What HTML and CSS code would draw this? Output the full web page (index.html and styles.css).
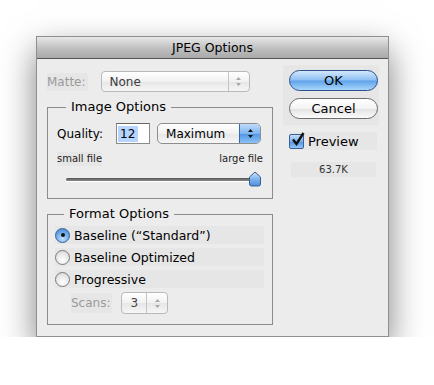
FILE: index.html
```html
<!DOCTYPE html>
<html lang="en">
<head>
  <meta charset="UTF-8" />
  <title>JPEG Options</title>
  <link rel="stylesheet" href="styles.css">
</head>
<body>
  <div class="window">
    <div class="titlebar">JPEG Options</div>
    <div class="content">
      <div class="left">
        <div class="matte-row">
          <span class="lbl muted shade">Matte:</span>
          <div class="popup disabled matte">
            <span class="popup-text">None</span>
            <span class="popup-arrows">
              <svg width="7" height="11" viewBox="0 0 7 11"><path d="M3.5 1 L6 4 H1 Z M3.5 10 L6 7 H1 Z" fill="#a8a8a8"/></svg>
            </span>
          </div>
        </div>

        <fieldset class="group">
          <legend>Image Options</legend>
          <div class="quality-row">
            <span class="lbl">Quality:</span>
            <div class="field"><span class="sel">12</span></div>
            <div class="popup quality">
              <span class="popup-text">Maximum</span>
              <span class="popup-arrows blue">
                <svg width="7" height="11" viewBox="0 0 7 11"><path d="M3.5 1 L6 4 H1 Z M3.5 10 L6 7 H1 Z" fill="#111"/></svg>
              </span>
            </div>
          </div>
          <div class="slider-labels">
            <span class="shade">small file</span>
            <span>large file</span>
          </div>
          <div class="slider">
            <div class="track"></div>
            <svg class="thumb" width="14" height="16" viewBox="0 0 14 16">
              <defs>
                <linearGradient id="tg" x1="0" y1="0" x2="0" y2="1">
                  <stop offset="0" stop-color="#cfe4fb"/>
                  <stop offset="0.5" stop-color="#7fb4ee"/>
                  <stop offset="1" stop-color="#4d8fdc"/>
                </linearGradient>
              </defs>
              <path d="M7 1 L12.5 6 V13 Q12.5 15 10.5 15 H3.5 Q1.5 15 1.5 13 V6 Z" fill="url(#tg)" stroke="#3b5e8f" stroke-width="1"/>
            </svg>
          </div>
        </fieldset>

        <fieldset class="group format">
          <legend>Format Options</legend>
          <div class="radio-row shade">
            <span class="radio on"><span class="dot"></span></span>
            <span>Baseline (“Standard”)</span>
          </div>
          <div class="radio-row shade">
            <span class="radio"></span>
            <span>Baseline Optimized</span>
          </div>
          <div class="radio-row shade">
            <span class="radio"></span>
            <span>Progressive</span>
          </div>
          <div class="scans-row">
            <span class="lbl muted shade">Scans:</span>
            <div class="popup disabled scans">
              <span class="popup-text">3</span>
              <span class="popup-arrows">
                <svg width="7" height="11" viewBox="0 0 7 11"><path d="M3.5 1 L6 4 H1 Z M3.5 10 L6 7 H1 Z" fill="#a8a8a8"/></svg>
              </span>
            </div>
          </div>
        </fieldset>
      </div>

      <div class="right">
        <div class="buttons shade">
          <button class="btn ok">OK</button>
          <button class="btn">Cancel</button>
        </div>
        <label class="check-row shade">
          <span class="checkbox">
            <svg width="16" height="16" viewBox="0 0 16 16"><path d="M3 7.5 L6.5 12 L13.5 1" fill="none" stroke="#111" stroke-width="2.4"/></svg>
          </span>
          <span>Preview</span>
        </label>
        <div class="size shade">63.7K</div>
      </div>
    </div>
  </div>
</body>
</html>
```

FILE: styles.css
```css
body {
  margin: 0;
  background: #fff;
  font-family: "DejaVu Sans", Verdana, sans-serif;
  font-size: 12px;
  color: #000;
}

.window {
  width: 351px;
  height: 299px;
  margin: 36px 0 0 36px;
  background: #ececec;
  border: 1px solid #8f8f8f;
  box-shadow: 0 14px 32px rgba(0, 0, 0, 0.5);
}

.titlebar {
  height: 21px;
  line-height: 22px;
  text-align: center;
  font-size: 12.5px;
  border-bottom: 1px solid #555;
  background: linear-gradient(#e8e8e8, #bcbcbc 60%, #a9a9a9);
}

.content {
  display: flex;
  gap: 16px;
  padding: 0 0 0 10px;
}

.left {
  width: 226px;
}

.shade {
  background: #e6e6e6;
}

.lbl.muted {
  color: #9a9a9a;
}

.matte-row {
  display: flex;
  align-items: center;
  margin-top: 12px;
  height: 21px;
}

.matte-row .lbl {
  padding: 2px 2px 2px 0;
  margin-right: 13px;
}

.popup {
  display: flex;
  align-items: center;
  height: 19px;
  border: 1px solid #8e8e8e;
  border-radius: 4px;
  background: linear-gradient(#ffffff, #f1f1f1 50%, #e6e6e6 51%, #f6f6f6);
  overflow: hidden;
}

.popup-text {
  flex: 1;
  padding-left: 8px;
}

.popup-arrows {
  width: 20px;
  height: 100%;
  display: flex;
  align-items: center;
  justify-content: center;
  border-left: 1px solid #c4c4c4;
}

.popup.disabled {
  border-color: #b9b9b9;
  color: #3a3a3a;
}

.matte {
  width: 147px;
}

.group {
  margin: 7px 0 0 0;
  padding: 8px 9px 8px 9px;
  border: 1px solid #8c8c8c;
}

.group legend {
  font-size: 13px;
  line-height: 16px;
  padding: 0 5px;
  margin-left: 9px;
}

.quality-row {
  display: flex;
  align-items: center;
  height: 21px;
}

.quality-row .lbl {
  margin-right: 13px;
}

.field {
  width: 31px;
  height: 19px;
  border: 1px solid #8a8a8a;
  border-top-color: #666;
  background: #fff;
  display: flex;
  align-items: center;
  padding-left: 1px;
  margin-right: 7px;
}

.sel {
  background: #b5d5ff;
  padding: 0 3px 0 2px;
  line-height: 16px;
}

.quality {
  width: 102px;
  height: 19px;
  border-radius: 5px;
}

.popup-arrows.blue {
  width: 20px;
  border-left: 1px solid #3a67a8;
  background: linear-gradient(#c1dcfa, #7db4f0 50%, #4e94e6 51%, #8cc2f5);
}

.slider-labels {
  display: flex;
  justify-content: space-between;
  margin-top: 8px;
  font-size: 10px;
  line-height: 14px;
  color: #222;
}

.slider {
  position: relative;
  height: 20px;
  margin: 3px 0 1px 0;
}

.track {
  position: absolute;
  left: 9px;
  right: 8px;
  top: 9px;
  height: 3px;
  border-radius: 2px;
  background: linear-gradient(#555, #8a8a8a);
  box-shadow: 0 1px 0 #fff;
}

.thumb {
  position: absolute;
  right: 1px;
  top: 2px;
}

.format {
  margin-top: 7px;
  padding: 4px 8px 10px 7px;
}

.radio-row {
  display: flex;
  align-items: center;
  gap: 4px;
  height: 18px;
  margin-bottom: 4px;
  font-size: 12.5px;
  width: 209px;
}

.radio {
  width: 13px;
  height: 13px;
  border-radius: 50%;
  border: 1px solid #7a7a7a;
  background: radial-gradient(circle at 50% 70%, #ffffff, #e6e6e6 60%, #cfcfcf);
  display: flex;
  align-items: center;
  justify-content: center;
}

.radio.on {
  border-color: #3b5f96;
  background: radial-gradient(circle at 50% 75%, #bfe0ff, #6ea9ea 55%, #3e7fd2);
}

.dot {
  width: 4px;
  height: 4px;
  border-radius: 50%;
  background: #111;
}

.scans-row {
  display: flex;
  align-items: center;
  height: 22px;
  margin-top: 1px;
  padding-left: 16px;
}

.scans-row .lbl {
  padding: 3px 2px 3px 0;
  margin-right: 9px;
}

.scans {
  width: 45px;
  height: 20px;
}

.scans .popup-text {
  padding-left: 8px;
  color: #444;
}

.right {
  width: 96px;
  padding-top: 6px;
  margin-left: -6px;
}

.buttons {
  display: flex;
  flex-direction: column;
  gap: 7px;
  padding: 5px 1px 6px 6px;
}

.btn {
  width: 89px;
  height: 21px;
  border-radius: 11px;
  border: 1px solid #6d6d6d;
  font-family: inherit;
  font-size: 13px;
  line-height: 18px;
  padding: 0;
  color: #000;
  background: linear-gradient(#ffffff, #f4f4f4 50%, #e2e2e2 51%, #fbfbfb);
}

.btn.ok {
  border-color: #2f4f8c;
  background: linear-gradient(#d3e8fc, #8dc0f3 48%, #5ea2ea 52%, #a8d6fb);
}

.check-row {
  display: flex;
  align-items: center;
  gap: 4px;
  height: 18px;
  margin: 7px 2px 0 6px;
  font-size: 13px;
}

.checkbox {
  width: 13px;
  height: 13px;
  border: 1px solid #3b5f96;
  border-radius: 2px;
  background: linear-gradient(#c6e0fb, #79b1ee 50%, #4f93e4 51%, #93c6f6);
  position: relative;
}

.checkbox svg {
  position: absolute;
  left: 0;
  top: -3px;
}

.size {
  margin: 12px 3px 0 8px;
  height: 15px;
  line-height: 15px;
  text-align: center;
  font-size: 10px;
  color: #333;
}
```
